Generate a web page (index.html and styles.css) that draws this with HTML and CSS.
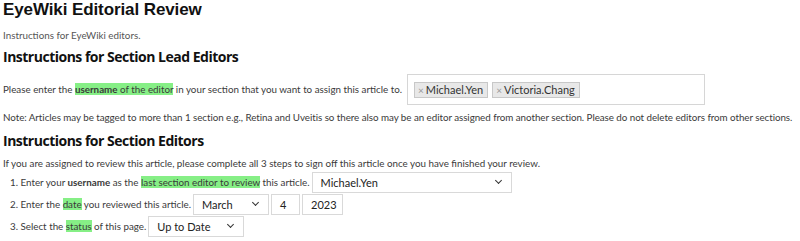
FILE: index.html
```html
<!DOCTYPE html>
<html>
<head>
<meta charset="utf-8">
<link rel="stylesheet" href="styles.css">
</head>
<body>
<div class="page">
  <h1 class="title">EyeWiki Editorial Review</h1>
  <p class="intro">Instructions for EyeWiki editors.</p>
  <h2 class="section">Instructions for Section Lead Editors</h2>
  <div class="assign-row">
    <span>Please enter the <span class="hl bold">username</span><span class="hl"> of the editor</span> in your section that you want to assign this article to.</span>
    <div class="tagbox">
      <span class="tag"><span class="x">×</span>Michael.Yen</span>
      <span class="tag"><span class="x">×</span>Victoria.Chang</span>
    </div>
  </div>
  <p class="note">Note: Articles may be tagged to more than 1 section e.g., Retina and Uveitis so there also may be an editor assigned from another section. Please do not delete editors from other sections.</p>
  <h2 class="section section2">Instructions for Section Editors</h2>
  <p class="para">If you are assigned to review this article, please complete all 3 steps to sign off this article once you have finished your review.</p>
  <ol class="steps">
    <li><span>1. Enter your <b>username</b> as the <span class="hl">last section editor to review</span> this article.</span>
      <div class="select w-user"><span>Michael.Yen</span><span class="chev"></span></div></li>
    <li><span>2. Enter the <span class="hl">date</span> you reviewed this article.</span>
      <div class="select w-month"><span>March</span><span class="chev"></span></div>
      <div class="input w-day">4</div>
      <div class="input w-year">2023</div></li>
    <li><span>3. Select the <span class="hl">status</span> of this page.</span>
      <div class="select w-status"><span>Up to Date</span><span class="chev"></span></div></li>
  </ol>
</div>
</body>
</html>
```

FILE: styles.css
```css
* { box-sizing: border-box; }
html, body { margin: 0; padding: 0; background: #fff; }
.page {
  padding: 0 3px;
  font-family: Lato, "Open Sans", sans-serif;
  font-size: 9.8px;
  color: #3a3a3a;
}
.title {
  margin: 0;
  font-family: "Liberation Sans", Arial, sans-serif;
  font-weight: 700;
  font-size: 17px;
  line-height: 19px;
  color: #111;
  letter-spacing: -0.1px;
}
.intro {
  margin: 9px 0 0;
  font-size: 9.8px;
  line-height: 14px;
  color: #555;
}
.section {
  margin: 6px 0 0;
  font-family: "Open Sans", "DejaVu Sans", sans-serif;
  font-weight: 700;
  font-size: 14px;
  line-height: 18px;
  letter-spacing: -0.5px;
  color: #111;
}
.section2 { margin-top: 8px; }
.assign-row {
  display: flex;
  align-items: center;
  gap: 5px;
  margin-top: 7px;
  height: 32px;
}
.hl { background: #86ef86; }
.bold { font-weight: 700; }
.tagbox {
  width: 298px;
  height: 31px;
  border: 1px solid #d6d6d6;
  padding: 7px 6px;
  display: flex;
  gap: 4px;
  align-items: flex-start;
}
.tag {
  background: #e8e8e8;
  border: 1px solid #c8c8c8;
  padding: 0 4px 0 3px;
  height: 16px;
  line-height: 14px;
  font-size: 11px;
  color: #333;
}
.tag .x { color: #999; font-size: 10px; margin-right: 2px; }
.note { margin: 5px 0 0; line-height: 14px; white-space: nowrap; letter-spacing: -0.05px; }
.para { margin: 6px 0 0; line-height: 14px; }
.steps {
  list-style: none;
  margin: 1px 0 0;
  padding: 0 0 0 7px;
}
.steps li {
  display: flex;
  align-items: center;
  gap: 2px;
  height: 22px;
}
.select, .input {
  height: 21px;
  border: 1px solid #d9d9d9;
  background: #fff;
  font-size: 11px;
  color: #222;
  display: flex;
  align-items: center;
  padding: 0 8px;
}
.select { justify-content: space-between; }
.chev {
  width: 5px; height: 5px;
  border-right: 1.6px solid #333;
  border-bottom: 1.6px solid #333;
  transform: rotate(45deg);
  margin-top: -3px;
  margin-right: 2px;
}
.w-user { width: 200px; }
.w-month { width: 76px; }
.w-day { width: 29px; }
.w-year { width: 41px; }
.w-status { width: 96px; }
```
